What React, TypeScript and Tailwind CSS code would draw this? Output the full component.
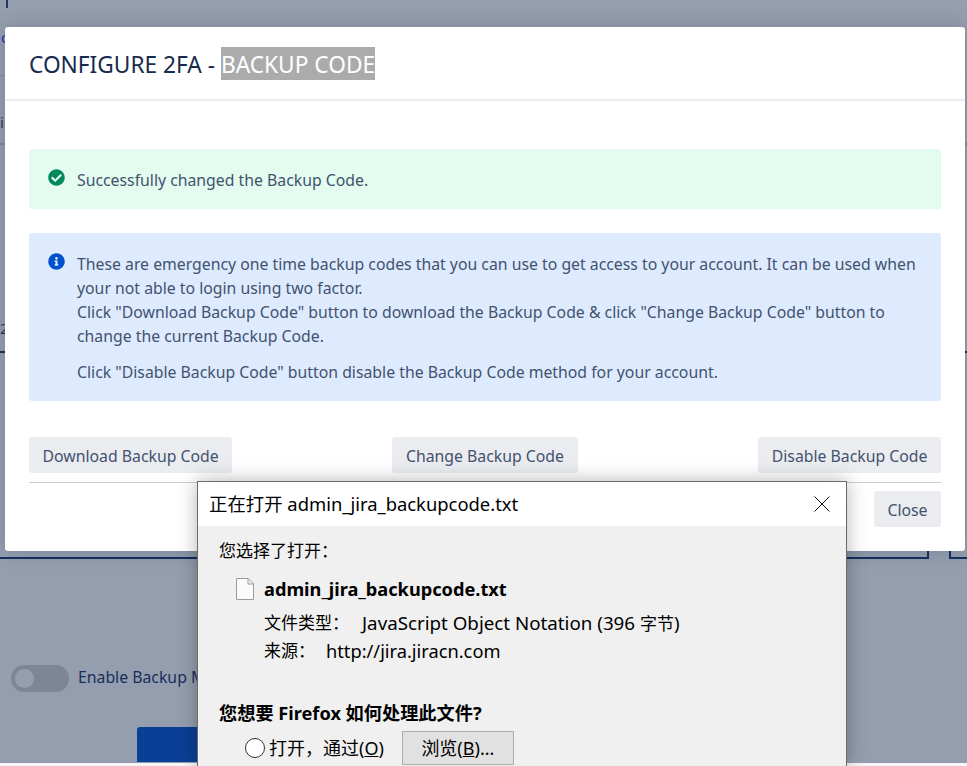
import React from 'react';
import { FaCheckCircle, FaInfoCircle } from 'react-icons/fa';

const uiFont = "font-['Noto_Sans','Noto_Sans_CJK_SC',sans-serif]";

const ActionButton = ({ label, className = '' }: { label: string; className?: string }) => (
  <button className={`h-9 px-[13.5px] pt-[2px] rounded-[3px] bg-[#ebecf0] text-[#42526e] text-[15.8px] leading-8 ${className}`}>
    {label}
  </button>
);

const BackgroundPage = () => (
  <div className="h-full flex flex-col bg-[#959eae]">
    <div className="h-[76px] border-b border-[#878f9f] pl-[1px] text-[15px] leading-6 text-[#1a2fc0]">
      <div className="ml-[5px] w-[2px] h-[8px] bg-[#25375a]" />
      <div className="mt-[17px]">c</div>
    </div>
    <div className="h-[69px] border-b-2 border-[#808898] pt-[34px] text-[15px] leading-6 text-[#25375a]">i</div>
    <div className="h-[208px] border-b-2 border-[#15305f] pt-[171px] text-[15px] leading-6 text-[#25375a]">2</div>
    <div className="h-[206px] flex">
      <div className="w-[929px] border-r-[2px] border-b-[2px] border-[#15305f]" />
      <div className="ml-[20px] flex-1 border-l-[2px] border-b-[2px] border-[#15305f]" />
    </div>
    <div className="flex items-center h-[27px] mt-[106px] pl-[11px] gap-[9px]">
      <div className="w-[58px] h-[27px] rounded-full bg-[#7e8696] flex items-center pl-[4px]">
        <div className="w-[19px] h-[19px] rounded-full bg-[#959eae]" />
      </div>
      <span className="text-[#172f5c] text-[15.8px] pb-[2px]">Enable Backup Method</span>
    </div>
    <div className="mt-[35px] ml-[137px] w-[200px] h-[35px] rounded-t-[3px] bg-[#0a3f96]" />
    <div className="mt-[1px] flex-1 bg-[#f4f5f7]" />
  </div>
);

const ConfigureModal = () => (
  <div className="absolute left-[5px] top-[27px] w-[960px] h-[524px] rounded-[3px] bg-white shadow-[0_0_20px_rgba(9,30,66,0.2)] flex flex-col">
    <div className="h-[74px] border-b-2 border-[#ebecf0] pl-[24px] pt-[20px]">
      <h2 className="text-[22.7px] leading-[36px] text-[#172b4d]">
        CONFIGURE 2FA - <span className="bg-[#ababab] text-white pt-[2px]">BACKUP CODE</span>
      </h2>
    </div>
    <div className="px-[24px] pt-[48px] flex flex-col">
      <div className="h-[60px] pt-[4px] rounded-[3px] bg-[#e3fcef] flex items-center pl-[19px] gap-[12px] text-[#42526e] text-[15.8px]">
        <FaCheckCircle className="text-[#00875a] text-[17px] -mt-[7px]" />
        <span>Successfully changed the Backup Code.</span>
      </div>
      <div className="mt-[24px] h-[168px] rounded-[3px] bg-[#deebff] flex pl-[19px] pr-[20px] pt-[19px] gap-[12px] text-[#42526e] text-[15.8px] leading-6">
        <FaInfoCircle className="text-[#0052cc] text-[17px] shrink-0 mt-[1px]" />
        <div>
          <p>
            These are emergency one time backup codes that you can use to get access to your account. It can be used when
            your not able to login using two factor.
          </p>
          <p>
            Click "Download Backup Code" button to download the Backup Code &amp; click "Change Backup Code" button to
            change the current Backup Code.
          </p>
          <p className="mt-[12px]">Click "Disable Backup Code" button disable the Backup Code method for your account.</p>
        </div>
      </div>
      <div className="mt-[36px] grid grid-cols-3 border-b border-[#cccccc] pb-[9px]">
        <ActionButton label="Download Backup Code" className="justify-self-start" />
        <ActionButton label="Change Backup Code" className="justify-self-center" />
        <ActionButton label="Disable Backup Code" className="justify-self-end" />
      </div>
      <div className="mt-[8px] flex justify-end">
        <ActionButton label="Close" />
      </div>
    </div>
  </div>
);

const OpenFileDialog = () => (
  <div className="absolute left-[197px] top-[481px] w-[650px] h-[285px] border border-[#6b6b6b] border-b-0 bg-[#f0f0f0] shadow-[0_0_18px_rgba(0,0,0,0.3)] text-black flex flex-col">
    <div className="h-[44px] shrink-0 bg-white flex items-center justify-between pl-[11px] pr-[16px] text-[18.4px]">
      <span>正在打开 admin_jira_backupcode.txt</span>
      <svg width="16" height="16" viewBox="0 0 16 16" fill="none" stroke="#111" strokeWidth="1">
        <path d="M0.5 0.5L15.5 15.5M15.5 0.5L0.5 15.5" />
      </svg>
    </div>
    <div className="pl-[21px] pt-[12px] text-[17px] leading-[26px]">
      <div>您选择了打开：</div>
      <div className="mt-[12px] ml-[17px] flex items-center gap-[10px]">
        <svg width="18" height="22" viewBox="0 0 18 22" fill="#fbfbfb" stroke="#9a9a9a" strokeWidth="1">
          <path d="M0.5 0.5H12L17.5 6V21.5H0.5Z" />
          <path d="M12 0.5V6H17.5" fill="none" />
        </svg>
        <span className="font-bold text-[18.2px]">admin_jira_backupcode.txt</span>
      </div>
      <div className="ml-[45px] mt-[8px] flex gap-[13px]">
        <span>文件类型：</span>
        <span className="text-[18.75px]">
          JavaScript Object Notation (396 <span className="text-[17px]">字节</span>)
        </span>
      </div>
      <div className="ml-[45px] mt-[1px] flex gap-[11px]">
        <span>来源：</span>
        <span className="text-[18.25px]">http://jira.jiracn.com</span>
      </div>
      <div className="mt-[36px] font-bold text-[18.2px]">您想要 Firefox 如何处理此文件?</div>
      <div className="mt-[5px] ml-[26px] flex items-center text-[18px]">
        <div className="w-[20px] h-[20px] rounded-full border border-[#333] bg-white" />
        <span className="ml-[4px]">
          打开，通过(<span className="underline">O</span>)
        </span>
        <button className="ml-[18px] w-[112px] h-[34px] border border-[#adadad] bg-[#e1e1e1]">
          浏览(<span className="underline">B</span>)...
        </button>
      </div>
    </div>
  </div>
);

export default function App() {
  return (
    <div className={`relative w-[967px] h-[766px] overflow-hidden ${uiFont}`}>
      <BackgroundPage />
      <ConfigureModal />
      <OpenFileDialog />
    </div>
  );
}
